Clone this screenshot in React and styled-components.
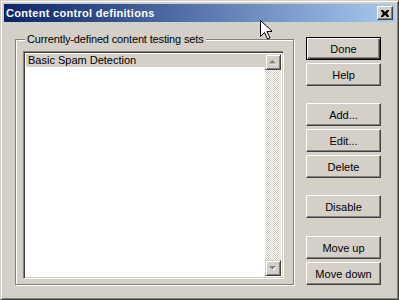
import React from 'react'
import styled, { createGlobalStyle } from 'styled-components'

const GlobalStyle = createGlobalStyle`
  html, body { margin: 0; padding: 0; background: #d4d0c8; }
  body { font-family: "Liberation Sans", Arial, sans-serif; font-size: 11px; }
`

const Window = styled.div`
  position: relative;
  width: 399px;
  height: 300px;
  box-sizing: border-box;
  background: #d4d0c8;
  border: 1px solid;
  border-color: #d4d0c8 #404040 #404040 #d4d0c8;
  box-shadow: inset 1px 1px 0 #fff, inset -1px -1px 0 #808080;
  padding: 3px;
  display: flex;
  flex-direction: column;
  color: #000;
`

const TitleBar = styled.div`
  height: 18px;
  display: flex;
  align-items: center;
  padding: 0 2px 0 2px;
  background: linear-gradient(to right, #0a246a, #a6caf0);
`

const Title = styled.div`
  flex: 1;
  color: #fff;
  font-weight: bold;
  font-size: 11px;
  letter-spacing: 0.3px;
`

const CloseButton = styled.div`
  width: 16px;
  height: 14px;
  box-sizing: border-box;
  background: #d4d0c8;
  border: 1px solid;
  border-color: #fff #404040 #404040 #fff;
  box-shadow: inset -1px -1px 0 #808080;
  display: flex;
  align-items: center;
  justify-content: center;
`

const Body = styled.div`
  flex: 1;
  display: flex;
  padding: 15px 0 0 11px;
`

const GroupBox = styled.div`
  position: relative;
  width: 270px;
  height: 233px;
  margin-top: 2px;
  border: 1px solid #808080;
  box-shadow: 1px 1px 0 #fff, inset 1px 1px 0 #fff;
  padding: 11px 0 0 7px;
  box-sizing: content-box;
`

const Legend = styled.span`
  position: absolute;
  top: -7px;
  left: 9px;
  padding: 0 2px;
  background: #d4d0c8;
  line-height: 13px;
  white-space: nowrap;
  letter-spacing: -0.15px;
`

const ListBox = styled.div`
  width: 261px;
  height: 228px;
  box-sizing: border-box;
  background: #fff;
  border: 1px solid;
  border-color: #808080 #fff #fff #808080;
  box-shadow: inset 1px 1px 0 #404040, inset -1px -1px 0 #d4d0c8;
  padding: 2px;
  display: flex;
`

const Items = styled.div`
  flex: 1;
`

const Item = styled.div`
  height: 13px;
  line-height: 13px;
  padding-left: 2px;
  background: ${(p) => (p.selected ? '#d4d0c8' : 'transparent')};
`

const ScrollBar = styled.div`
  width: 16px;
  display: flex;
  flex-direction: column;
  background: repeating-conic-gradient(#d4d0c8 0 25%, #fff 0 50%) 0 0 / 2px 2px;
`

const Track = styled.div`
  flex: 1;
`

const ScrollButton = styled.div`
  width: 16px;
  height: 16px;
  box-sizing: border-box;
  background: #d4d0c8;
  border: 1px solid;
  border-color: #d4d0c8 #404040 #404040 #d4d0c8;
  box-shadow: inset 1px 1px 0 #fff, inset -1px -1px 0 #808080;
  display: flex;
  align-items: center;
  justify-content: center;
`

const Buttons = styled.div`
  display: flex;
  flex-direction: column;
  margin-left: 12px;
`

const Button = styled.div`
  width: 75px;
  height: 23px;
  box-sizing: border-box;
  display: flex;
  align-items: center;
  justify-content: center;
  background: #d4d0c8;
  border: 1px solid;
  border-color: ${(p) => (p.primary ? '#000' : '#fff #404040 #404040 #fff')};
  box-shadow: ${(p) =>
    p.primary
      ? 'inset 1px 1px 0 #fff, inset -1px -1px 0 #404040, inset -2px -2px 0 #808080'
      : 'inset -1px -1px 0 #808080'};
  margin-top: ${(p) => p.gap ?? 3}px;
`

const Cursor = styled.svg`
  position: absolute;
  left: 259px;
  top: 19px;
`

const Arrow = ({ down }) => (
  <svg width="8" height="5" viewBox="0 0 8 5">
    {down ? (
      <>
        <path d="M1 1h7l-3.5 3.5z" fill="#fff" />
        <path d="M0 0h7l-3.5 3.5z" fill="#808080" />
      </>
    ) : (
      <>
        <path d="M1 4.5h7l-3.5-3.5z" fill="#fff" />
        <path d="M0 3.5h7l-3.5-3.5z" fill="#808080" />
      </>
    )}
  </svg>
)

export default function App() {
  return (
    <>
      <GlobalStyle />
      <Window>
        <TitleBar>
          <Title>Content control definitions</Title>
          <CloseButton>
            <svg width="8" height="7" viewBox="0 0 8 7">
              <path d="M0 0h2l2 2 2-2h2v1l-2 2.5 2 2.5v1h-2l-2-2-2 2h-2v-1l2-2.5-2-2.5z" fill="#000" />
            </svg>
          </CloseButton>
        </TitleBar>
        <Body>
          <GroupBox>
            <Legend>Currently-defined content testing sets</Legend>
            <ListBox>
              <Items>
                <Item selected>Basic Spam Detection</Item>
              </Items>
              <ScrollBar>
                <ScrollButton><Arrow /></ScrollButton>
                <Track />
                <ScrollButton><Arrow down /></ScrollButton>
              </ScrollBar>
            </ListBox>
          </GroupBox>
          <Buttons>
            <Button primary gap={0}>Done</Button>
            <Button>Help</Button>
            <Button gap={17}>Add...</Button>
            <Button>Edit...</Button>
            <Button>Delete</Button>
            <Button gap={17}>Disable</Button>
            <Button gap={18}>Move up</Button>
            <Button>Move down</Button>
          </Buttons>
        </Body>
        <Cursor width="12" height="20" viewBox="0 0 12 20">
          <path d="M0.5 0.5v16l4-4 3 6.5 2.5-1-3-6.5h5.5z" fill="#fff" stroke="#000" strokeWidth="1" />
        </Cursor>
      </Window>
    </>
  )
}
